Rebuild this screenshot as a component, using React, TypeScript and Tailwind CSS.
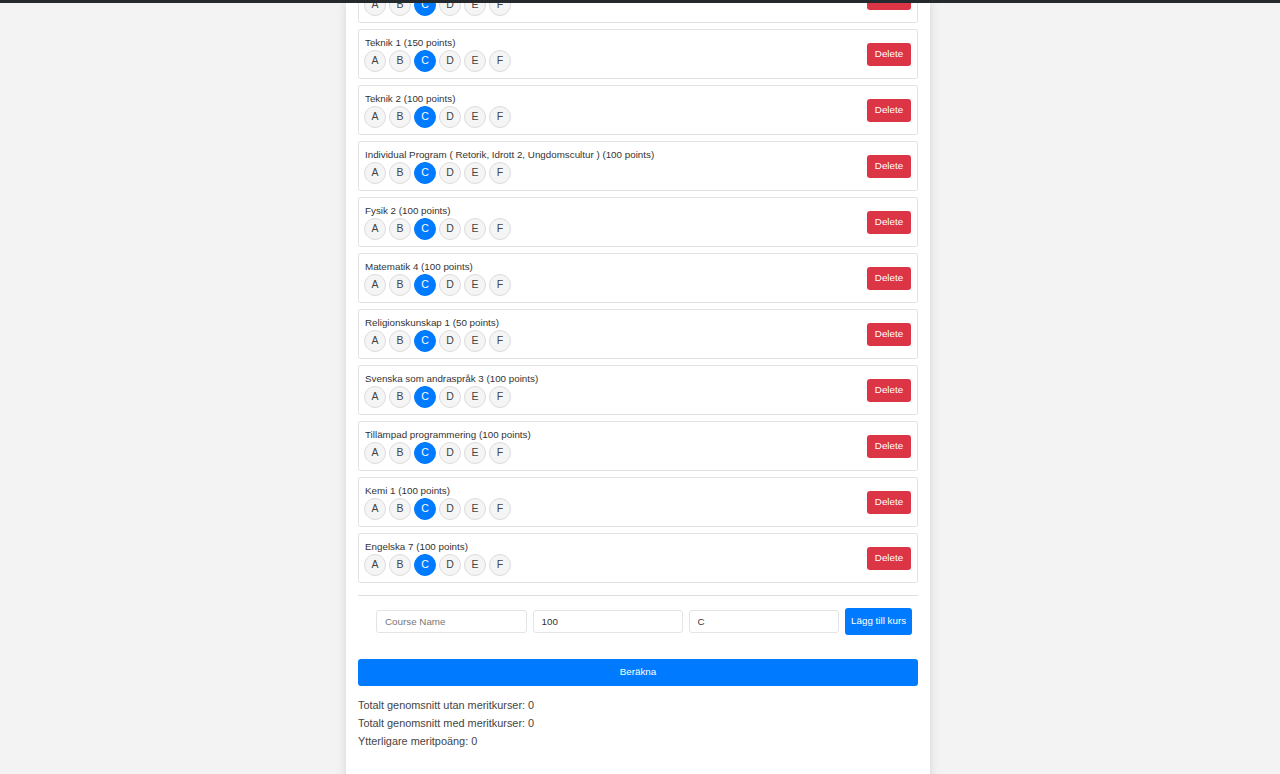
import { useState } from "react";

type Course = { name: string; points: number; grade: string };

const GRADES = ["A", "B", "C", "D", "E", "F"];

const INITIAL: Course[] = [
	{ name: "Programmering 1", points: 100, grade: "C" },
	{ name: "Teknik 1", points: 150, grade: "C" },
	{ name: "Teknik 2", points: 100, grade: "C" },
	{
		name: "Individual Program ( Retorik, Idrott 2, Ungdomscultur )",
		points: 100,
		grade: "C",
	},
	{ name: "Fysik 2", points: 100, grade: "C" },
	{ name: "Matematik 4", points: 100, grade: "C" },
	{ name: "Religionskunskap 1", points: 50, grade: "C" },
	{ name: "Svenska som andraspråk 3", points: 100, grade: "C" },
	{ name: "Tillämpad programmering", points: 100, grade: "C" },
	{ name: "Kemi 1", points: 100, grade: "C" },
	{ name: "Engelska 7", points: 100, grade: "C" },
];

function CourseRow({
	course,
	onGrade,
	onDelete,
}: {
	course: Course;
	onGrade: (g: string) => void;
	onDelete: () => void;
}) {
	return (
		<div className="flex h-[50px] items-center justify-between rounded-[2px] border border-[#e3e3e3] bg-white pl-[5px] pr-[6px]">
			<div className="flex flex-col">
				<div className="h-[13px] pl-px text-[9.8px] leading-[13px] text-[#333]">
					{course.name} ({course.points} points)
				</div>
				<div className="mt-px flex gap-[3px]">
					{GRADES.map((g) => (
						<button
							key={g}
							onClick={() => onGrade(g)}
							className={
								g === course.grade
									? "flex h-[22px] w-[22px] items-center justify-center rounded-full border border-[#007bff] bg-[#007bff] text-[10.5px] text-white"
									: "flex h-[22px] w-[22px] items-center justify-center rounded-full border border-[#dcdcdc] bg-[#f5f5f5] text-[10.5px] text-[#444]"
							}
						>
							{g}
						</button>
					))}
				</div>
			</div>
			<button
				onClick={onDelete}
				className="h-[23px] w-[44px] rounded-[3px] bg-[#dc3545] text-[9.8px] text-white"
			>
				Delete
			</button>
		</div>
	);
}

export default function App() {
	const [courses, setCourses] = useState<Course[]>(INITIAL);

	return (
		<div
			className="relative flex h-[774px] justify-center overflow-hidden bg-[#f3f3f3] pr-[4px]"
			style={{ fontFamily: '"Liberation Sans", Arial, sans-serif' }}
		>
			<div className="absolute left-0 right-0 top-0 z-10 h-[3px] bg-[#24292e]" />
			<div className="min-h-[900px] w-[584px] shrink-0 bg-white px-[12px] shadow-[0_0_10px_rgba(0,0,0,0.12)]">
				<div className="-mt-[27px] flex flex-col gap-[6px]">
					{courses.map((c, i) => (
						<CourseRow
							key={c.name}
							course={c}
							onGrade={(g) =>
								setCourses(
									courses.map((x, j) => (j === i ? { ...x, grade: g } : x)),
								)
							}
							onDelete={() => setCourses(courses.filter((_, j) => j !== i))}
						/>
					))}
				</div>

				<div className="mt-[12px] border-t border-[#dedede]" />

				<div className="flex items-center gap-[6px] pl-[18px] pr-[6px] pt-[12px]">
					<input
						placeholder="Course Name"
						className="h-[23px] w-[151px] rounded-[3px] border border-[#e4e4e4] px-[8px] text-[9.8px] text-[#333] placeholder:text-[#777] outline-none"
					/>
					<input
						defaultValue="100"
						className="h-[23px] w-[150px] rounded-[3px] border border-[#e4e4e4] px-[8px] text-[9.8px] text-[#333] outline-none"
					/>
					<input
						defaultValue="C"
						className="h-[23px] w-[151px] rounded-[3px] border border-[#e4e4e4] px-[8px] text-[9.8px] text-[#333] outline-none"
					/>
					<button className="h-[27px] w-[67px] rounded-[3px] bg-[#007bff] text-[9.8px] text-white">
						Lägg till kurs
					</button>
				</div>

				<button className="mt-[24px] h-[27px] w-full rounded-[3px] bg-[#007bff] text-[9.8px] text-white">
					Beräkna
				</button>

				<div className="mt-[10px] text-[10.9px] leading-[18px] text-[#444]">
					<p>Totalt genomsnitt utan meritkurser: 0</p>
					<p>Totalt genomsnitt med meritkurser: 0</p>
					<p>Ytterligare meritpoäng: 0</p>
				</div>
			</div>
		</div>
	);
}
